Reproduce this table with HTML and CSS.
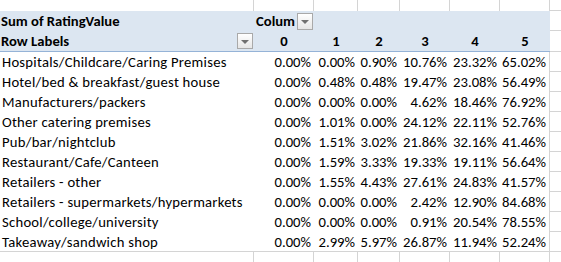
FILE: index.html
```html
<!DOCTYPE html>
<html>
<head>
<meta charset="utf-8">
<link rel="stylesheet" href="styles.css">
</head>
<body>
<div class="sheet">
  <!-- top partial row -->
  <div class="g"></div><div class="g"></div><div class="g"></div><div class="g"></div><div class="g"></div><div class="g"></div><div class="g"></div><div class="r"></div>

  <!-- header row 1 -->
  <div class="h lbl"><span class="b">Sum of RatingValue</span></div>
  <div class="h colhdr"><span class="b">Colum</span><span class="dd dd-col"><i class="tri"></i></span></div>
  <div class="h"></div><div class="h"></div><div class="h"></div><div class="h"></div><div class="h"></div>
  <div class="r"></div>

  <!-- header row 2 -->
  <div class="h h2 lbl rowhdr"><span class="b">Row Labels</span><span class="dd dd-row"><i class="tri"></i></span></div>
  <div class="h h2 num">0</div><div class="h h2 num">1</div><div class="h h2 num">2</div><div class="h h2 num">3</div><div class="h h2 num">4</div><div class="h h2 num">5</div>
  <div class="r"></div>

  <div class="d lbl">Hospitals/Childcare/Caring Premises</div><div class="d v">0.00%</div><div class="d v">0.00%</div><div class="d v">0.90%</div><div class="d v">10.76%</div><div class="d v">23.32%</div><div class="d v e">65.02%</div><div class="r"></div>
  <div class="d lbl">Hotel/bed &amp; breakfast/guest house</div><div class="d v">0.00%</div><div class="d v">0.48%</div><div class="d v">0.48%</div><div class="d v">19.47%</div><div class="d v">23.08%</div><div class="d v e">56.49%</div><div class="r"></div>
  <div class="d lbl">Manufacturers/packers</div><div class="d v">0.00%</div><div class="d v">0.00%</div><div class="d v">0.00%</div><div class="d v">4.62%</div><div class="d v">18.46%</div><div class="d v e">76.92%</div><div class="r"></div>
  <div class="d lbl">Other catering premises</div><div class="d v">0.00%</div><div class="d v">1.01%</div><div class="d v">0.00%</div><div class="d v">24.12%</div><div class="d v">22.11%</div><div class="d v e">52.76%</div><div class="r"></div>
  <div class="d lbl">Pub/bar/nightclub</div><div class="d v">0.00%</div><div class="d v">1.51%</div><div class="d v">3.02%</div><div class="d v">21.86%</div><div class="d v">32.16%</div><div class="d v e">41.46%</div><div class="r"></div>
  <div class="d lbl">Restaurant/Cafe/Canteen</div><div class="d v">0.00%</div><div class="d v">1.59%</div><div class="d v">3.33%</div><div class="d v">19.33%</div><div class="d v">19.11%</div><div class="d v e">56.64%</div><div class="r"></div>
  <div class="d lbl">Retailers - other</div><div class="d v">0.00%</div><div class="d v">1.55%</div><div class="d v">4.43%</div><div class="d v">27.61%</div><div class="d v">24.83%</div><div class="d v e">41.57%</div><div class="r"></div>
  <div class="d lbl">Retailers - supermarkets/hypermarkets</div><div class="d v">0.00%</div><div class="d v">0.00%</div><div class="d v">0.00%</div><div class="d v">2.42%</div><div class="d v">12.90%</div><div class="d v e">84.68%</div><div class="r"></div>
  <div class="d lbl">School/college/university</div><div class="d v">0.00%</div><div class="d v">0.00%</div><div class="d v">0.00%</div><div class="d v">0.91%</div><div class="d v">20.54%</div><div class="d v e">78.55%</div><div class="r"></div>
  <div class="d last lbl">Takeaway/sandwich shop</div><div class="d last v">0.00%</div><div class="d last v">2.99%</div><div class="d last v">5.97%</div><div class="d last v">26.87%</div><div class="d last v">11.94%</div><div class="d last v e">52.24%</div><div class="r"></div>

  <!-- bottom partial row -->
  <div class="g"></div><div class="g"></div><div class="g"></div><div class="g"></div><div class="g"></div><div class="g"></div><div class="g"></div><div class="r nb"></div>
</div>
</body>
</html>
```

FILE: styles.css
```css
* { box-sizing: border-box; }
html, body { margin: 0; padding: 0; background: #ffffff; }
body { width: 561px; height: 262px; overflow: hidden; }

.sheet {
  display: grid;
  grid-template-columns: 254px 60px 44px 42px 50px 50px 50px 1fr;
  grid-template-rows: 11px 20px 21px repeat(10, 20px) 1fr;
  height: 262px;
  font-family: Carlito, Calibri, Lato, "Liberation Sans", sans-serif;
  font-size: 14.67px;
  color: #000000;
}

.sheet > div {
  display: flex;
  align-items: center;
  white-space: nowrap;
  line-height: 1;
  min-width: 0;
}

.g { border-right: 1px solid #d4d4d4; }
.r { border-bottom: 1px solid #d4d4d4; }
.r.nb { border-bottom: none; }

.h { background: #dce6f1; }
.h2 { border-bottom: 1px solid #95b3d7; }
.b { font-weight: bold; }

.lbl { padding-left: 1px; }
.d.lbl { padding-left: 2px; letter-spacing: 0.25px; }

.colhdr { padding-left: 2px; justify-content: space-between; align-items: flex-start; padding-right: 1px; }
.colhdr .b { align-self: center; margin-top: 1px; }
.rowhdr { justify-content: space-between; padding-right: 1px; }

.num { justify-content: center; font-weight: bold; padding-top: 1px; }

.d { background: #ffffff; padding-top: 1px; }
.v { justify-content: flex-end; padding-right: 3px; }
.e { border-right: 1px solid #d4d4d4; }
.last { border-bottom: 1px solid #d4d4d4; }

.dd {
  display: flex;
  align-items: center;
  justify-content: center;
  width: 16px;
  height: 16px;
  border: 1px solid #a9a9a9;
  background: linear-gradient(#ffffff, #e6e6e6);
}
.dd-col { height: 17px; margin-top: 1px; }

.tri {
  display: block;
  width: 0;
  height: 0;
  border-left: 4px solid transparent;
  border-right: 4px solid transparent;
  border-top: 4px solid #707070;
  margin-top: 1px;
}
```
